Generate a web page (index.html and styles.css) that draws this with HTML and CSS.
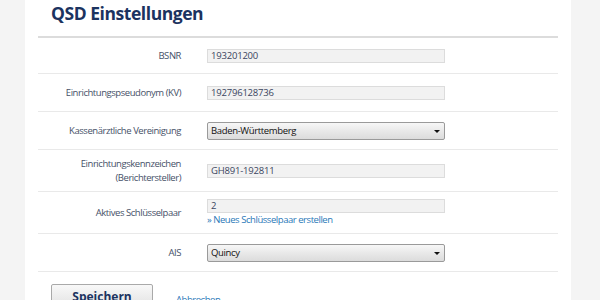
FILE: index.html
```html
<!DOCTYPE html>
<html lang="de">
<head>
  <meta charset="UTF-8">
  <title>QSD Einstellungen</title>
  <link rel="stylesheet" href="styles.css">
</head>
<body>
  <div class="page">
    <h1 class="title">QSD Einstellungen</h1>

    <div class="form">
      <div class="row first">
        <span class="label">BSNR</span>
        <div class="field"><div class="input">193201200</div></div>
      </div>

      <div class="row">
        <span class="label">Einrichtungspseudonym (KV)</span>
        <div class="field"><div class="input">192796128736</div></div>
      </div>

      <div class="row">
        <span class="label">Kassenärztliche Vereinigung</span>
        <div class="field"><div class="select">Baden-Württemberg<span class="arrow"></span></div></div>
      </div>

      <div class="row tall">
        <span class="label">Einrichtungskennzeichen<br>(Berichtersteller)</span>
        <div class="field"><div class="input">GH891-192811</div></div>
      </div>

      <div class="row tall">
        <span class="label">Aktives Schlüsselpaar</span>
        <div class="field">
          <div class="input">2</div>
          <a class="link" href="#">» Neues Schlüsselpaar erstellen</a>
        </div>
      </div>

      <div class="row">
        <span class="label">AIS</span>
        <div class="field"><div class="select">Quincy<span class="arrow"></span></div></div>
      </div>
    </div>

    <div class="actions">
      <button class="button">Speichern</button>
      <a class="link cancel" href="#">Abbrechen</a>
    </div>
  </div>
</body>
</html>
```

FILE: styles.css
```css
body {
  margin: 0;
  background-color: #f4f4f4;
  font-family: "Open Sans", sans-serif;
  height: 300px;
  overflow: hidden;
}
.page {
  background-color: #fff;
  width: 520px;
  margin-left: 25px;
  padding: 0 13px;
  height: 300px;
}
.title {
  margin: 0;
  height: 36px;
  padding-left: 13px;
  font-size: 17.5px;
  line-height: 27px;
  font-weight: bold;
  color: #1b3360;
  letter-spacing: -0.45px;
  border-bottom: 2px solid #dcdcdc;
}
.row {
  display: grid;
  grid-template-columns: 143px 238px;
  column-gap: 26px;
  align-items: center;
  height: 37px;
  border-bottom: 1px solid #e9e9e9;
}
.row.first {
  height: 35px;
}
.row.tall {
  height: 41px;
}
.label {
  text-align: right;
  font-size: 9.5px;
  line-height: 14px;
  letter-spacing: -0.45px;
  color: #465168;
}
.field {
  display: flex;
  flex-direction: column;
}
.input {
  height: 12px;
  line-height: 12px;
  padding: 0 3px;
  font-size: 9.5px;
  letter-spacing: -0.2px;
  color: #3a4560;
  background-color: #f2f2f2;
  border: 1px solid #dcdcdc;
}
.select {
  position: relative;
  height: 16px;
  line-height: 16px;
  padding: 0 3px;
  font-size: 9.5px;
  letter-spacing: -0.35px;
  color: #111;
  border: 1px solid #9a9a9a;
  border-radius: 2px;
  background: linear-gradient(#f7f7f7, #e6e6e6 60%, #dcdcdc);
}
.arrow {
  position: absolute;
  right: 4px;
  top: 7px;
  border-left: 3px solid transparent;
  border-right: 3px solid transparent;
  border-top: 3px solid #111;
}
.link {
  color: #2a78b8;
  text-decoration: none;
  font-size: 9.5px;
  line-height: 14px;
  letter-spacing: -0.45px;
}
.actions {
  display: flex;
  align-items: flex-start;
  gap: 23px;
  margin-top: 12px;
  padding-left: 13px;
}
.button {
  width: 102px;
  height: 24px;
  font-family: inherit;
  font-size: 12px;
  font-weight: bold;
  color: #1b3360;
  background: linear-gradient(#f8f8f8, #e2e2e2);
  border: 1px solid #a9a9a9;
  border-radius: 2px;
  padding: 0;
}
.cancel {
  margin-top: 9px;
}
```
